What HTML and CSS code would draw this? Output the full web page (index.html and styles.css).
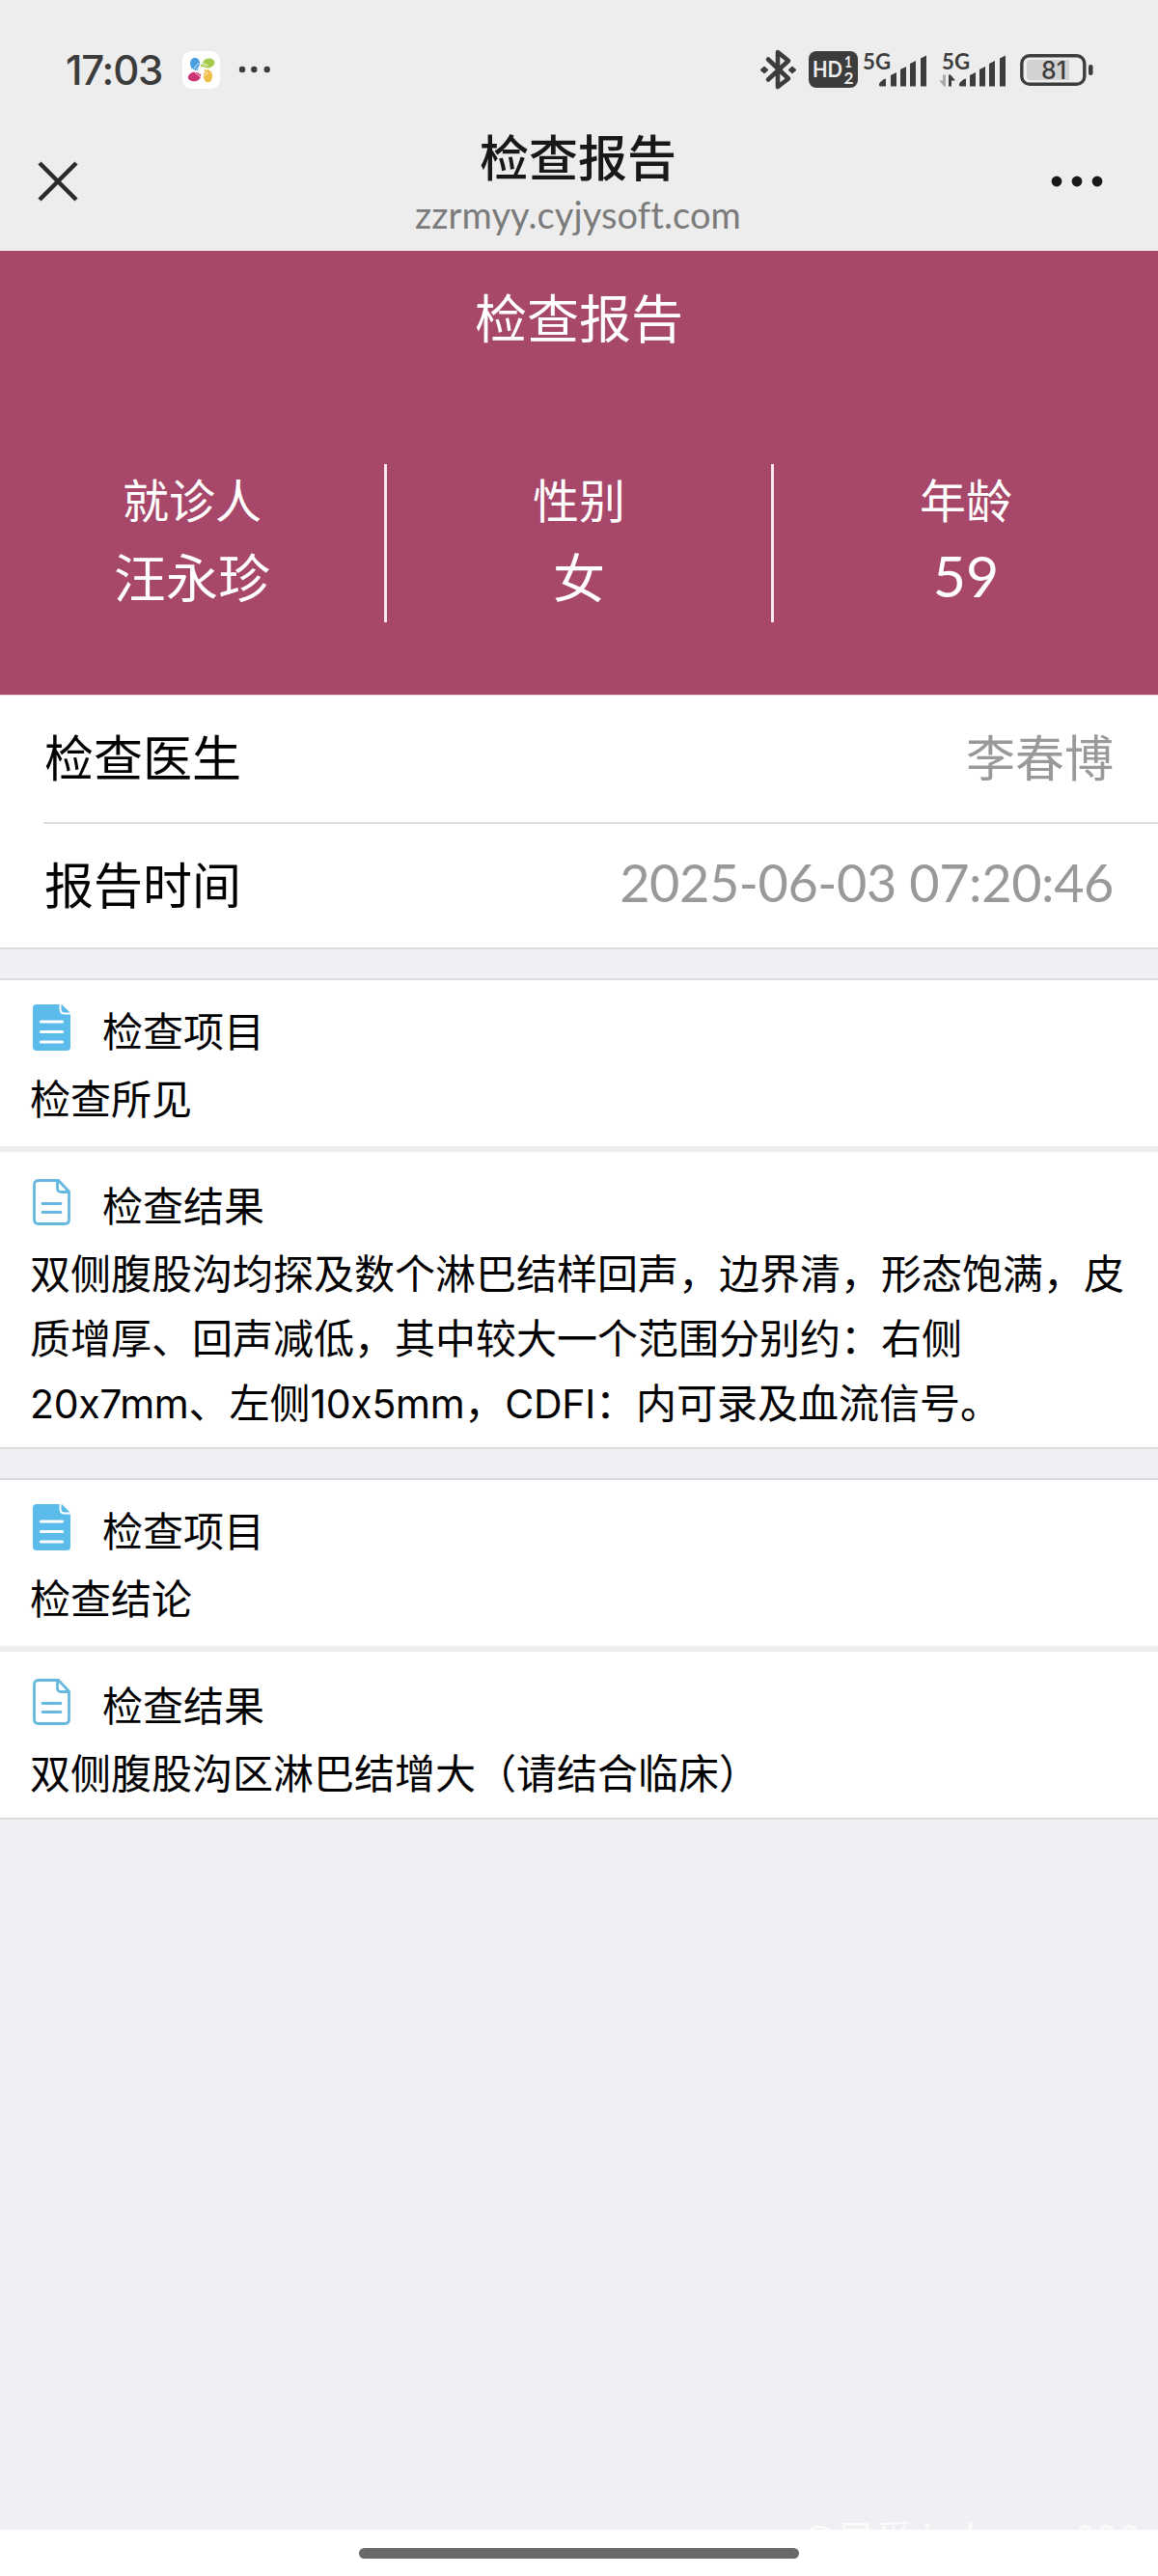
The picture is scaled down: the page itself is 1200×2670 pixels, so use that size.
FILE: index.html
```
<!DOCTYPE html>
<html lang="zh-CN">
<head>
  <meta charset="UTF-8">
  <meta name="viewport" content="width=device-width, initial-scale=1.0">
  <title>检查报告</title>
  <link rel="stylesheet" href="styles.css">
</head>
<body>
  <div class="status-bar">
    <span class="clock">17:03</span>
    <svg class="app-icon" width="39" height="39" viewBox="0 0 39 39">
      <rect width="39" height="39" rx="9" fill="#fff"/>
      <ellipse cx="13" cy="13" rx="5" ry="6.2" fill="#4a9fe0"/>
      <path d="M12 14h5l-1 6h-3z" fill="#4a9fe0"/>
      <ellipse cx="27" cy="12.5" rx="6.5" ry="4.8" transform="rotate(-12 27 12.5)" fill="#a5c94b"/>
      <path d="M19 14l6-3v6l-6-1z" fill="#a5c94b"/>
      <ellipse cx="12.5" cy="26.5" rx="6.7" ry="4.7" transform="rotate(-10 12.5 26.5)" fill="#cb3572"/>
      <path d="M13 22l7 2-5 4z" fill="#cb3572"/>
      <ellipse cx="26.5" cy="26" rx="4.6" ry="6.4" fill="#efbd48"/>
      <path d="M23 19h4v6h-5z" fill="#efbd48"/>
      <path d="M12 18l5-6M14 20l4-5M19 13l6 3M21 12l6 3M13 22l6 5M15 21l5 4M22 26l5-4M22 23l4-4" stroke="#fff" stroke-width=".8" fill="none"/>
    </svg>
    <svg class="more-small" width="34" height="8" viewBox="0 0 34 8" fill="#3c3c3c">
      <circle cx="4" cy="4" r="3.2"/><circle cx="16.3" cy="4" r="3.2"/><circle cx="29.7" cy="4" r="3.2"/>
    </svg>
    <div class="status-icons">
      <svg width="40" height="44" viewBox="0 0 40 44">
        <path d="M9 11.500L30 31.500L19 40V4L30 13L9 32.500" fill="none" stroke="#3c3c3c" stroke-width="4.600" stroke-linejoin="round" stroke-linecap="round"/>
        <path d="M1 22.500l4-3.500 4 3.500-4 3.500zM30 22.500l4-3.500 4 3.500-4 3.500z" fill="#3c3c3c" stroke="#3c3c3c" stroke-linejoin="round"/>
      </svg>
      <svg class="hd" width="51" height="38" viewBox="0 0 51 38">
        <rect width="51" height="38" rx="8" fill="#3c3c3c"/>
        <text x="4" y="27" font-size="22" font-weight="700" textLength="31" lengthAdjust="spacingAndGlyphs">HD</text>
        <text x="37" y="16.500" font-size="17" font-weight="700" textLength="8" lengthAdjust="spacingAndGlyphs">1</text>
        <text x="36.500" y="34" font-size="17" font-weight="700" textLength="10" lengthAdjust="spacingAndGlyphs">2</text>
      </svg>
      <svg class="signal" width="66" height="44" viewBox="0 -5 66 44">
        <text x="0" y="17" font-size="22.500" font-weight="700" textLength="29" lengthAdjust="spacingAndGlyphs">5G</text>
        <path d="M17 32q0-1.500 5-5q2-1 2 0v7.500h-5.500q-1.500 0-1.500-1.500zM29 23l6-3v14.500h-6zM39 17l6-3v20.500h-6zM49 11l6-3v26.500h-6zM60 5.500l6-3v32h-6z"/>
      </svg>
      <svg class="signal signal-2" width="69" height="44" viewBox="0 -5 69 44">
        <text x="3" y="17" font-size="22.500" font-weight="700" textLength="29" lengthAdjust="spacingAndGlyphs">5G</text>
        <path class="down" d="M4 22.500h3v12h-2L.500 28.500H4z"/>
        <path d="M10 34.500v-12h2l5 6h-4v6z"/>
        <path d="M21 32q0-1.500 5-5q2-1 2 0v7.500h-5.500q-1.500 0-1.500-1.500zM32 23l6-3v14.500h-6zM42 17l6-3v20.500h-6zM52 11l6-3v26.500h-6zM63 5.500l6-3v32h-6z"/>
      </svg>
      <svg class="battery" width="76" height="33" viewBox="0 0 76 33">
        <rect x="1.800" y="1.800" width="65" height="29.400" rx="8" fill="none" stroke="#3c3c3c" stroke-width="3.400"/>
        <path d="M11 6h40v21H11q-4 0-4-4V10q0-4 4-4z" fill="#d2d2d2"/>
        <rect x="71" y="11" width="4.500" height="11" rx="2.200" fill="#3c3c3c"/>
        <text x="22" y="25.500" font-size="25" font-weight="500" textLength="26" lengthAdjust="spacingAndGlyphs">81</text>
      </svg>
    </div>
  </div>

  <header class="nav-bar">
    <svg class="close" width="42" height="42" viewBox="0 0 42 42">
      <path d="M2 2l38 38M40 2L2 40" stroke="#2a2a2a" stroke-width="4.500"/>
    </svg>
    <div class="nav-text">
      <div class="nav-title">检查报告</div>
      <div class="nav-url">zzrmyy.cyjysoft.com</div>
    </div>
    <svg class="more" width="54" height="12" viewBox="0 0 54 12" fill="#181818">
      <circle cx="6" cy="6" r="5.400"/><circle cx="27" cy="6" r="5.400"/><circle cx="48" cy="6" r="5.400"/>
    </svg>
  </header>

  <section class="hero">
    <h1>检查报告</h1>
    <div class="patient">
      <div class="patient-col">
        <div class="label">就诊人</div>
        <div class="value">汪永珍</div>
      </div>
      <div class="patient-col">
        <div class="label">性别</div>
        <div class="value">女</div>
      </div>
      <div class="patient-col">
        <div class="label">年龄</div>
        <div class="value num">59</div>
      </div>
    </div>
  </section>

  <section class="info">
    <div class="info-row">
      <span>检查医生</span>
      <span class="info-value">李春博</span>
    </div>
    <div class="info-row">
      <span>报告时间</span>
      <span class="info-value date">2025-06-03 07:20:46</span>
    </div>
  </section>

  <section class="report">
    <div class="item">
      <div class="item-head">
        <svg width="40" height="48" viewBox="0 0 40 48">
          <path d="M4 0h26l9 9v35q0 4-4 4H4q-4 0-4-4V4q0-4 4-4z" fill="#5bbcec"/>
          <path d="M28.500 0v5q0 4.500 4.500 4.500h6" fill="none" stroke="#fff" stroke-width="2"/>
          <path d="M8.500 18h22M8.500 28.500h22M8.500 39h22" stroke="#fff" stroke-width="3.200" stroke-linecap="round"/>
        </svg>
        <span>检查项目</span>
      </div>
      <p>检查所见</p>
    </div>
    <div class="item result">
      <div class="item-head">
        <svg width="40" height="48" viewBox="0 0 40 48" fill="none" stroke="#65b8de" stroke-width="2.800">
          <path d="M6 1.500h20.500L37.500 13v29q0 4.500-4.500 4.500H6q-4.500 0-4.500-4.500V6q0-4.500 4.500-4.500z"/>
          <path d="M25.500 2v7.500q0 4 4 4h8"/>
          <path d="M10 25.500h19M10 34.500h19" stroke-linecap="round"/>
        </svg>
        <span>检查结果</span>
      </div>
      <p>双侧腹股沟均探及数个淋巴结样回声，边界清，形态饱满，皮质增厚、回声减低，其中较大一个范围分别约：右侧<br><span class="latin">20x7mm</span>、左侧<span class="latin">10x5mm</span>，<span class="latin">CDFI</span>：内可录及血流信号。</p>
    </div>
  </section>

  <section class="report">
    <div class="item">
      <div class="item-head">
        <svg width="40" height="48" viewBox="0 0 40 48">
          <path d="M4 0h26l9 9v35q0 4-4 4H4q-4 0-4-4V4q0-4 4-4z" fill="#5bbcec"/>
          <path d="M28.500 0v5q0 4.500 4.500 4.500h6" fill="none" stroke="#fff" stroke-width="2"/>
          <path d="M8.500 18h22M8.500 28.500h22M8.500 39h22" stroke="#fff" stroke-width="3.200" stroke-linecap="round"/>
        </svg>
        <span>检查项目</span>
      </div>
      <p>检查结论</p>
    </div>
    <div class="item result">
      <div class="item-head">
        <svg width="40" height="48" viewBox="0 0 40 48" fill="none" stroke="#65b8de" stroke-width="2.800">
          <path d="M6 1.500h20.500L37.500 13v29q0 4.500-4.500 4.500H6q-4.500 0-4.500-4.500V6q0-4.500 4.500-4.500z"/>
          <path d="M25.500 2v7.500q0 4 4 4h8"/>
          <path d="M10 25.500h19M10 34.500h19" stroke-linecap="round"/>
        </svg>
        <span>检查结果</span>
      </div>
      <p>双侧腹股沟区淋巴结增大（请结合临床）</p>
    </div>
  </section>

  <footer class="home-bar">
    <div class="home-pill"></div>
    <div class="watermark">@星爵 in house086</div>
  </footer>
</body>
</html>
```
FILE: styles.css
```
* {
  box-sizing: border-box;
}

body {
  margin: 0;
  width: 1200px;
  height: 2670px;
  display: flex;
  flex-direction: column;
  background-color: #efeff4;
  color: #000;
  font-family: "Noto Sans CJK SC", sans-serif;
  overflow: hidden;
}

svg {
  display: block;
  flex-shrink: 0;
}

p, h1 {
  margin: 0;
  font-weight: 400;
}

/* Status bar */
.status-bar {
  height: 120px;
  padding: 24px 67px 0 68px;
  display: flex;
  align-items: center;
  background-color: #ededed;
}

.clock {
  width: 121px;
  font-family: Inter, sans-serif;
  font-size: 42px;
  font-weight: 500;
  letter-spacing: -1.2px;
  color: #3c3c3c;
}

.more-small {
  margin-left: 19px;
}

.status-icons {
  margin-left: auto;
  display: flex;
  align-items: center;
}

.status-icons text {
  font-family: Lato, sans-serif;
  fill: #3c3c3c;
}

.hd {
  margin-left: 11px;
}

.status-icons .hd text {
  fill: #ededed;
}

.signal {
  margin-left: 5px;
  fill: #3c3c3c;
  overflow: visible;
}

.signal-2 {
  margin-left: 13px;
}

.signal .down {
  fill: #aaa;
}

.battery {
  margin-left: 15px;
}

.status-icons .battery text {
  font-family: Inter, sans-serif;
}

/* Title bar */
.nav-bar {
  height: 140px;
  padding: 0 57px 0 39px;
  display: flex;
  justify-content: space-between;
  background-color: #ededed;
}

.close {
  margin-top: 47px;
}

.more {
  margin-top: 62px;
}

.nav-text {
  margin-left: 28px;
  text-align: center;
}

.nav-title {
  padding-top: 3px;
  font-size: 51px;
  line-height: 76px;
  font-weight: 500;
  color: #181818;
}

.nav-url {
  font-family: Lato, sans-serif;
  font-size: 38px;
  line-height: 46px;
  letter-spacing: 0.1px;
  color: #7b7b7b;
}

/* Patient header */
.hero {
  height: 460px;
  background-color: #a74769;
  color: #fff;
  text-align: center;
}

.hero h1 {
  padding-top: 28px;
  font-size: 54px;
  line-height: 80px;
}

.patient {
  margin-top: 113px;
  display: grid;
  grid-template-columns: 401px 401px 1fr;
}

.patient-col {
  height: 164px;
  border-right: 3px solid #ffe6ef;
}

.patient-col:last-child {
  border-right: none;
}

.label {
  font-size: 48px;
  line-height: 70px;
}

.value {
  font-size: 54px;
  line-height: 92px;
}

.num {
  font-family: Lato, sans-serif;
  font-size: 59px;
}

/* Doctor and time */
.info {
  height: 264px;
  padding-left: 45px;
  background-color: #fff;
  border-top: 1px solid #efd9e1;
  border-bottom: 2px solid #dcdcde;
}

.info-row {
  height: 130px;
  padding: 0 46px 8px 1px;
  display: flex;
  justify-content: space-between;
  align-items: center;
  font-size: 51px;
  line-height: 76px;
}

.info-row:first-child {
  height: 133px;
  border-bottom: 2px solid #dedede;
}

.info-value {
  color: #999;
}

.date {
  font-family: Lato, sans-serif;
  font-size: 54px;
  letter-spacing: -0.4px;
}

/* Report blocks */
.report {
  margin-top: 30px;
  background-color: #fff;
  border-top: 2px solid #dcdcde;
  border-bottom: 2px solid #dcdcde;
  font-size: 42px;
  line-height: 67.2px;
}

.item {
  height: 172px;
  padding: 17px 31px 0;
}

.item-head {
  display: flex;
  align-items: center;
  gap: 32px;
  padding-left: 3px;
  margin-bottom: 2.6px;
}

.item-head svg {
  margin-top: -3px;
}

.result {
  height: auto;
  border-top: 6px solid #eee;
  padding-top: 20px;
  padding-bottom: 14.6px;
}

.latin {
  font-family: Inter, sans-serif;
  font-size: 41px;
  line-height: 1;
  letter-spacing: -0.3px;
}

/* Gesture bar */
.home-bar {
  position: relative;
  height: 48px;
  margin-top: auto;
  padding-top: 19px;
  background-color: #fff;
}

.home-pill {
  width: 456px;
  height: 11px;
  margin: 0 auto;
  border-radius: 6px;
  background-color: #696969;
}

.watermark {
  position: absolute;
  right: 20px;
  bottom: 13px;
  font-size: 40px;
  line-height: 54px;
  color: rgba(255, 255, 255, 0.75);
}
```
